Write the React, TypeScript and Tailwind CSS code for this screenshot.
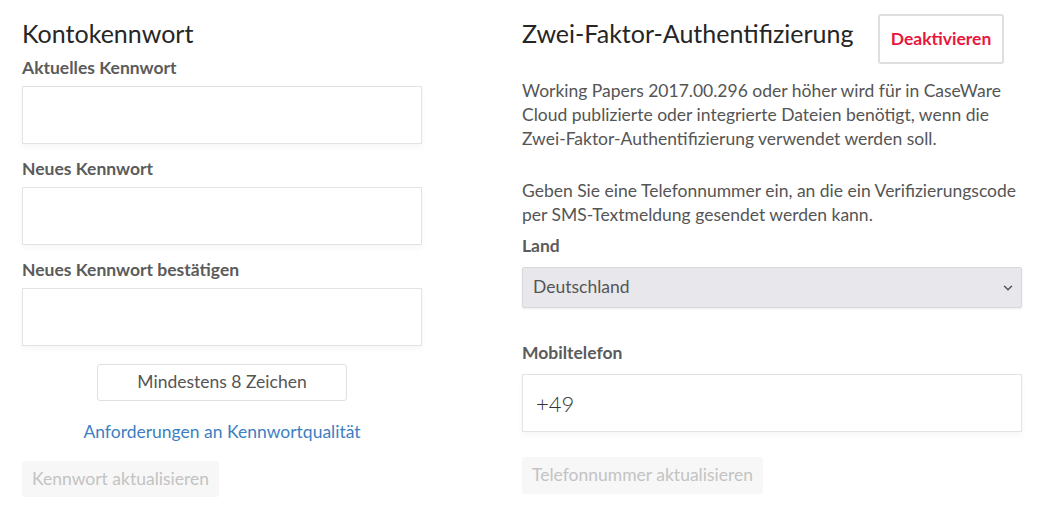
import { ChevronDown } from 'lucide-react';

const font = { fontFamily: 'Lato, "Open Sans", sans-serif' };

function Field({ label }: { label: string }) {
  return (
    <div className="mb-[12px]">
      <label className="block text-[17.5px] font-bold leading-[26px] text-[#5b5b5b] mb-[5px]">{label}</label>
      <input
        type="password"
        className="block w-full h-[58px] border border-[#e3e3e3] bg-white shadow-[0_3px_6px_rgba(0,0,0,0.04)] outline-none"
      />
    </div>
  );
}

export default function App() {
  return (
    <div style={font} className="flex gap-[100px] pl-[22px] pt-[14px] bg-white min-h-[524px] w-[1038px]">
      {/* Account password */}
      <div className="w-[400px]">
        <h2 className="text-[25px] leading-[38px] text-[#262626] mb-[3px]">Kontokennwort</h2>
        <Field label="Aktuelles Kennwort" />
        <Field label="Neues Kennwort" />
        <Field label="Neues Kennwort bestätigen" />
        <div className="flex justify-center mt-[18px]">
          <div className="w-[250px] h-[37px] flex items-center justify-center border border-[#e0e0e0] rounded-[3px] text-[17.5px] text-[#555]">
            Mindestens 8 Zeichen
          </div>
        </div>
        <div className="text-center mt-[19px] text-[17.5px] leading-[24px] text-[#3d7fc2]">
          <a href="#">Anforderungen an Kennwortqualität</a>
        </div>
        <button
          disabled
          className="mt-[17px] h-[36px] px-[10px] rounded-[3px] bg-[#f7f7f7] text-[17.5px] text-[#c3c3c3]"
        >
          Kennwort aktualisieren
        </button>
      </div>

      {/* Two-factor auth */}
      <div className="w-[500px]">
        <div className="flex items-start">
          <h2 className="text-[25px] leading-[38px] text-[#262626]">Zwei-Faktor-Authentifizierung</h2>
          <button className="ml-auto mr-[18px] w-[126px] h-[50px] border-2 border-[#dedede] rounded-[3px] bg-white text-[17.5px] font-bold text-[#e8173d]">
            Deaktivieren
          </button>
        </div>
        <p className="mt-[15px] text-[17.5px] leading-[24px] text-[#555]">
          Working Papers 2017.00.296 oder höher wird für in CaseWare Cloud publizierte oder integrierte Dateien benötigt, wenn die Zwei-Faktor-Authentifizierung verwendet werden soll.
        </p>
        <p className="mt-[28px] text-[17.5px] leading-[24px] text-[#555]">
          Geben Sie eine Telefonnummer ein, an die ein Verifizierungscode per SMS-Textmeldung gesendet werden kann.
        </p>
        <label className="block mt-[6px] text-[17.5px] font-bold leading-[26px] text-[#5b5b5b] mb-[8px]">Land</label>
        <div className="relative h-[41px] bg-[#e8e8ec] border border-[#d9d9dc] rounded-[2px] shadow-[0_1px_2px_rgba(0,0,0,0.08)] flex items-center pl-[10px] text-[17.5px] text-[#555]">
          Deutschland
          <ChevronDown size={14} strokeWidth={2.5} className="absolute right-[6px] top-[13px] text-[#555]" />
        </div>
        <label className="block mt-[32px] text-[17.5px] font-bold leading-[26px] text-[#5b5b5b] mb-[8px]">Mobiltelefon</label>
        <div className="h-[58px] border border-[#e3e3e3] bg-white shadow-[0_3px_6px_rgba(0,0,0,0.04)] flex items-center pl-[13px] text-[22px] font-light text-[#333]">
          +49
        </div>
        <button
          disabled
          className="mt-[25px] h-[37px] px-[10px] rounded-[3px] bg-[#f7f7f7] text-[17.5px] text-[#c3c3c3]"
        >
          Telefonnummer aktualisieren
        </button>
      </div>
    </div>
  );
}
